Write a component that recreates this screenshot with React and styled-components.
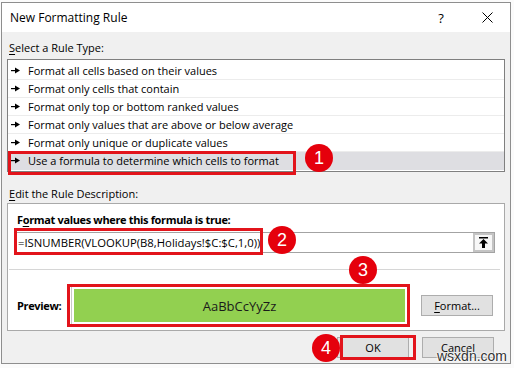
import React from "react";
import styled, { createGlobalStyle } from "styled-components";

const GlobalStyle = createGlobalStyle`
  html, body {
    margin: 0;
    padding: 0;
    background: #ffffff;
  }
  body {
    font-family: "Open Sans", "Noto Sans", sans-serif;
    font-size: 11px;
    color: #000;
  }
  u {
    text-decoration-thickness: 1px;
    text-underline-offset: 2px;
  }
`;

const Page = styled.div`
  position: relative;
  width: 514px;
  height: 368px;
  overflow: hidden;
  box-sizing: border-box;
  padding: 2px 0 0 1px;
  background: #fbfbfb;
`;

const Dialog = styled.div`
  position: relative;
  width: 510px;
  height: 362px;
  box-sizing: border-box;
  border: 1px solid #8e8e8e;
  background: #f0f0f0;
  display: flex;
  flex-direction: column;
`;

const TitleBar = styled.div`
  height: 29px;
  background: #fff;
  display: flex;
  align-items: center;
  padding-left: 8px;
  font-size: 12px;
`;

const Title = styled.div`
  flex: 1;
`;

const TitleButton = styled.div`
  width: 46px;
  height: 29px;
  display: flex;
  align-items: center;
  justify-content: center;
  font-size: 13px;
`;

const Body = styled.div`
  display: flex;
  flex-direction: column;
  padding: 0 5px;
`;

const Label = styled.div`
  line-height: 16px;
  padding-left: 2px;
  margin-top: ${(p) => p.$top}px;
`;

const ListBox = styled.div`
  margin-top: 3px;
  width: 498px;
  box-sizing: border-box;
  border: 1px solid #7f7f7f;
  background: #fff;
  padding: 2px 0 1px 0;
`;

const Row = styled.div`
  height: 18px;
  box-sizing: border-box;
  border-bottom: 1px solid ${(p) => (p.$last ? "transparent" : "#ececec")};
  background: ${(p) => (p.$selected ? "#dedee2" : "transparent")};
  display: flex;
  align-items: center;
  padding-left: 3px;
  gap: 8px;
  line-height: 17px;
`;

const Panel = styled.div`
  margin-top: 1px;
  width: 498px;
  height: 128px;
  box-sizing: border-box;
  border: 1px solid #a9a9a9;
  background: #fff;
  display: flex;
  flex-direction: column;
`;

const BoldLabel = styled.div`
  font-weight: 700;
  letter-spacing: -0.35px;
  line-height: 16px;
  padding: 8px 0 0 9px;
`;

const Input = styled.div`
  margin: 4px 0 0 7px;
  width: 480px;
  height: 21px;
  box-sizing: border-box;
  border: 1px solid #a3a3a3;
  display: flex;
  align-items: center;
  padding-left: 2px;
  font-size: 11.3px;
`;

const InputText = styled.div`
  flex: 1;
`;

const PickButton = styled.div`
  width: 21px;
  height: 19px;
  box-sizing: border-box;
  border: 2px solid #c4c4c4;
  background: #f7f7f7;
  display: flex;
  align-items: center;
  justify-content: center;
`;

const Divider = styled.div`
  margin: 16px 4px 0 1px;
  height: 1px;
  background: #d6d6d6;
`;

const PreviewRow = styled.div`
  margin-top: 16px;
  display: flex;
  align-items: center;
  padding-left: 9px;
`;

const PreviewLabel = styled.div`
  width: 54px;
  font-weight: 700;
  letter-spacing: -0.35px;
`;

const PreviewFrame = styled.div`
  border: 1px solid #c9c9c9;
  padding: 2px;
  background: #fff;
`;

const PreviewFill = styled.div`
  width: 331px;
  height: 33px;
  background: #92d050;
  display: flex;
  align-items: center;
  justify-content: center;
  font-size: 13px;
  color: #1a1a1a;
`;

const Button = styled.div`
  width: 72px;
  height: 21px;
  box-sizing: border-box;
  border: 1px solid #adadad;
  background: #e1e1e1;
  display: flex;
  align-items: center;
  justify-content: center;
  margin-left: ${(p) => p.$gap || 0}px;
`;

const Footer = styled.div`
  display: flex;
  justify-content: flex-end;
  padding: 6px 11px 0 0;
`;

const RedBox = styled.div`
  position: absolute;
  box-sizing: border-box;
  border: 3px solid #e2141b;
  pointer-events: none;
`;

const Badge = styled.div`
  position: absolute;
  width: 28px;
  height: 28px;
  border-radius: 50%;
  background: #e5000c;
  color: #fff;
  font-family: "Liberation Sans", Arial, sans-serif;
  font-size: 18px;
  display: flex;
  align-items: center;
  justify-content: center;
`;

const Watermark = styled.div`
  position: absolute;
  left: 437px;
  top: 348px;
  font-family: "Liberation Sans", Arial, sans-serif;
  font-size: 14px;
  color: #333;
  text-shadow: 0 0 2px #fff, 0 0 2px #fff, 0 0 2px #fff;
`;

const RowArrow = () => (
  <svg width="9" height="7" viewBox="0 0 9 7">
    <rect x="0" y="3" width="5" height="1.2" fill="#000" />
    <polygon points="4,0.6 9,3.6 4,6.6" fill="#000" />
  </svg>
);

const CloseIcon = () => (
  <svg width="11" height="11" viewBox="0 0 11 11">
    <path d="M0.5 0.5 L10.5 10.5 M10.5 0.5 L0.5 10.5" stroke="#000" strokeWidth="1" />
  </svg>
);

const UpIcon = () => (
  <svg width="11" height="11" viewBox="0 0 11 11">
    <rect x="1" y="0" width="9" height="1.5" fill="#000" />
    <polygon points="5.5,2 10,6.5 7,6.5 7,11 4,11 4,6.5 1,6.5" fill="#000" />
  </svg>
);

const rules = [
  "Format all cells based on their values",
  "Format only cells that contain",
  "Format only top or bottom ranked values",
  "Format only values that are above or below average",
  "Format only unique or duplicate values",
  "Use a formula to determine which cells to format",
];

const marks = [
  { n: 1, box: [6, 148, 288, 24], dot: [303, 141] },
  { n: 2, box: [12, 225, 249, 27], dot: [266, 223] },
  { n: 3, box: [65, 281, 343, 43], dot: [347, 253] },
  { n: 4, box: [338, 332, 76, 25], dot: [310, 331] },
];

const App = () => {
  return (
    <Page>
      <GlobalStyle />
      <Dialog>
        <TitleBar>
          <Title>New Formatting Rule</Title>
          <TitleButton>?</TitleButton>
          <TitleButton>
            <CloseIcon />
          </TitleButton>
        </TitleBar>
        <Body>
          <Label $top={8}>
            <u>S</u>elect a Rule Type:
          </Label>
          <ListBox>
            {rules.map((r, i) => (
              <Row key={r} $selected={i === rules.length - 1} $last={i === rules.length - 1}>
                <RowArrow />
                <span>{r}</span>
              </Row>
            ))}
          </ListBox>
          <Label $top={14}>
            <u>E</u>dit the Rule Description:
          </Label>
          <Panel>
            <BoldLabel>
              F<u>o</u>rmat values where this formula is true:
            </BoldLabel>
            <Input>
              <InputText>=ISNUMBER(VLOOKUP(B8,Holidays!$C:$C,1,0))</InputText>
              <PickButton>
                <UpIcon />
              </PickButton>
            </Input>
            <Divider />
            <PreviewRow>
              <PreviewLabel>Preview:</PreviewLabel>
              <PreviewFrame>
                <PreviewFill>AaBbCcYyZz</PreviewFill>
              </PreviewFrame>
              <Button $gap={13}>
                <span>
                  <u>F</u>ormat...
                </span>
              </Button>
            </PreviewRow>
          </Panel>
          <Footer>
            <Button>OK</Button>
            <Button $gap={13}>Cancel</Button>
          </Footer>
        </Body>
        {marks.map((m) => (
          <React.Fragment key={m.n}>
            <RedBox
              style={{ left: m.box[0], top: m.box[1], width: m.box[2], height: m.box[3] }}
            />
            <Badge style={{ left: m.dot[0], top: m.dot[1] }}>{m.n}</Badge>
          </React.Fragment>
        ))}
      </Dialog>
      <Watermark>wsxdn.com</Watermark>
    </Page>
  );
};

export default App;
